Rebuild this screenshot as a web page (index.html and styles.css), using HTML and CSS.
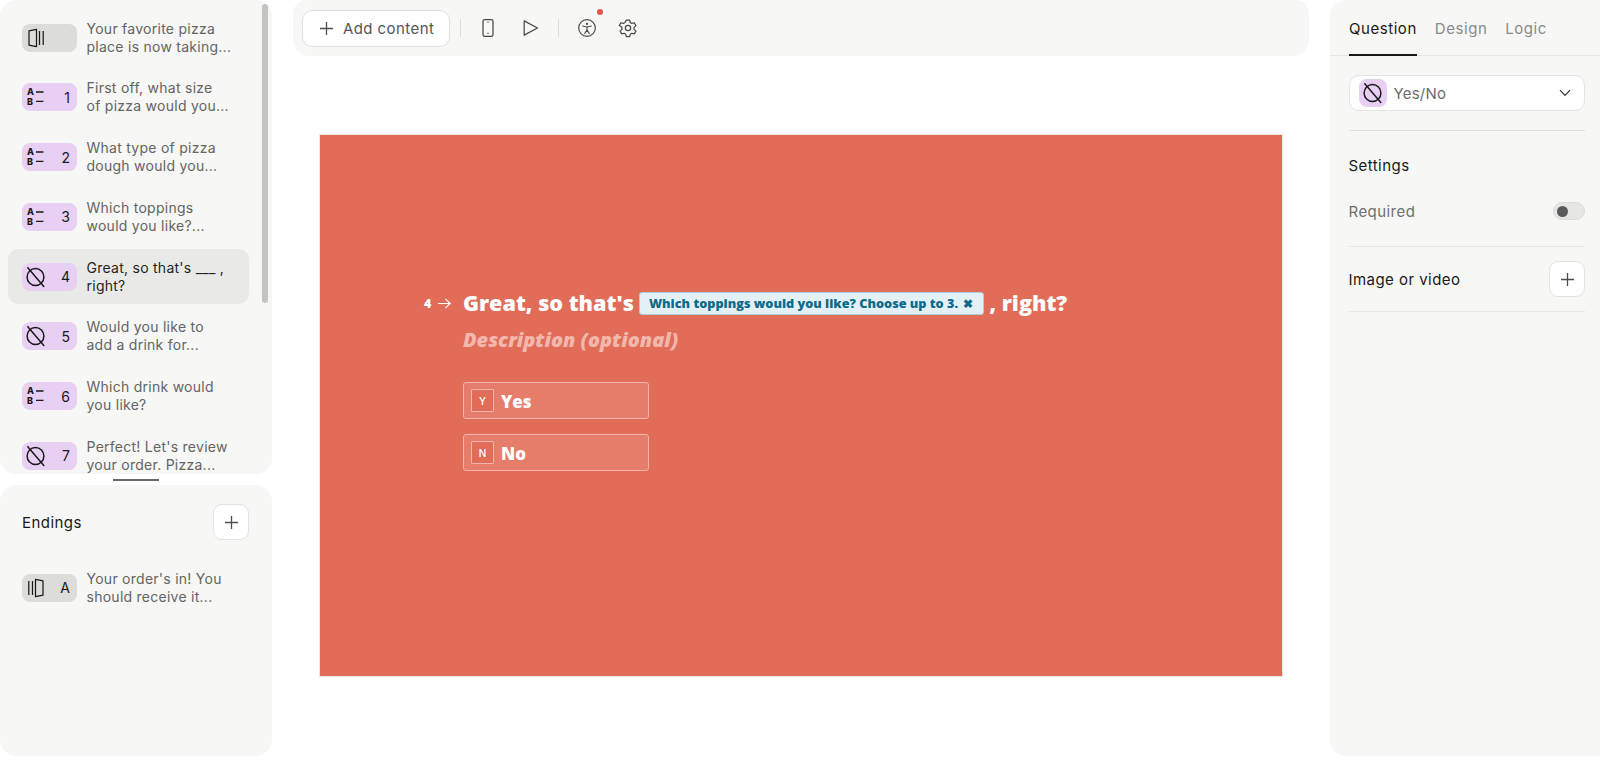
FILE: index.html
```html
<!DOCTYPE html>
<html lang="en">
<head>
<meta charset="utf-8">
<title>Form builder</title>
<link rel="stylesheet" href="styles.css">
</head>
<body>
<svg class="defs" width="0" height="0" aria-hidden="true">
  <defs>
    <symbol id="i-yesno" viewBox="0 0 24 24">
      <circle cx="11.5" cy="12" r="8.4" fill="none" stroke="#191919" stroke-width="1.5"/>
      <path d="M3.8 2.8 19.8 21.4" fill="none" stroke="#191919" stroke-width="1.5" stroke-linecap="round"/>
    </symbol>
    <symbol id="i-ab" viewBox="0 0 24 24">
      <text x="3" y="10.4" class="ab-letter">A</text>
      <text x="3" y="19.6" class="ab-letter">B</text>
      <path d="M12 7h7.5M12 16.4h7.5" stroke="#191919" stroke-width="1.4" fill="none"/>
    </symbol>
    <symbol id="i-welcome" viewBox="0 0 24 24">
      <path d="M5 4.8 12.5 3.4v17.2L5 19.2z" fill="none" stroke="#191919" stroke-width="1.25" stroke-linejoin="round"/>
      <path d="M15.5 5v14M19.2 5v14" stroke="#191919" stroke-width="1.25" fill="none"/>
    </symbol>
    <symbol id="i-ending" viewBox="0 0 24 24">
      <path d="M4.8 5v14M8.5 5v14" stroke="#191919" stroke-width="1.25" fill="none"/>
      <path d="M11.5 3.4l7.5 1.4v14.4l-7.5 1.4z" fill="none" stroke="#191919" stroke-width="1.25" stroke-linejoin="round"/>
    </symbol>
    <symbol id="i-plus" viewBox="0 0 16 16">
      <path d="M8 1v14M1 8h14" stroke="currentColor" stroke-width="1.4" fill="none"/>
    </symbol>
  </defs>
</svg>

<div class="app">
  <aside class="left">
    <section class="panel questions">
      <div class="thumb"></div>
      <ul class="list">
        <li class="row"><span class="badge grey"><svg class="bi"><use href="#i-welcome"/></svg></span><span class="row-text">Your favorite pizza<br>place is now taking...</span></li>
        <li class="row"><span class="badge"><svg class="bi"><use href="#i-ab"/></svg><b>1</b></span><span class="row-text">First off, what size<br>of pizza would you...</span></li>
        <li class="row"><span class="badge"><svg class="bi"><use href="#i-ab"/></svg><b>2</b></span><span class="row-text">What type of pizza<br>dough would you...</span></li>
        <li class="row"><span class="badge"><svg class="bi"><use href="#i-ab"/></svg><b>3</b></span><span class="row-text">Which toppings<br>would you like?...</span></li>
        <li class="row active"><span class="badge"><svg class="bi"><use href="#i-yesno"/></svg><b>4</b></span><span class="row-text">Great, so that's ___ ,<br>right?</span></li>
        <li class="row"><span class="badge"><svg class="bi"><use href="#i-yesno"/></svg><b>5</b></span><span class="row-text">Would you like to<br>add a drink for...</span></li>
        <li class="row"><span class="badge"><svg class="bi"><use href="#i-ab"/></svg><b>6</b></span><span class="row-text">Which drink would<br>you like?</span></li>
        <li class="row"><span class="badge"><svg class="bi"><use href="#i-yesno"/></svg><b>7</b></span><span class="row-text">Perfect! Let's review<br>your order. Pizza...</span></li>
      </ul>
    </section>
    <div class="handle-wrap"><div class="handle"></div></div>
    <section class="panel endings">
      <div class="end-head">
        <h2 class="label">Endings</h2>
        <button class="square-btn"><svg class="plus-sm"><use href="#i-plus"/></svg></button>
      </div>
      <div class="row end-row"><span class="badge grey"><svg class="bi"><use href="#i-ending"/></svg><b>A</b></span><span class="row-text">Your order's in! You<br>should receive it...</span></div>
    </section>
  </aside>

  <main class="center">
    <div class="toolbar">
      <button class="add-btn"><svg class="plus-md"><use href="#i-plus"/></svg>Add content</button>
      <span class="sep"></span>
      <svg class="tool phone" viewBox="0 0 24 24"><rect x="6" y="2" width="12" height="20" rx="2" fill="none" stroke="#4a4a4a" stroke-width="1.5"/><circle cx="12" cy="18.4" r="0.9" fill="#4a4a4a"/><path d="M11 5h2" stroke="#4a4a4a" stroke-width="1"/></svg>
      <svg class="tool play" viewBox="0 0 24 24"><path d="M5 3.5 21 12 5 20.5z" fill="none" stroke="#4a4a4a" stroke-width="1.5" stroke-linejoin="round"/></svg>
      <span class="sep sep2"></span>
      <span class="a11y">
        <svg class="tool" viewBox="0 0 24 24"><circle cx="12" cy="12" r="10" fill="none" stroke="#4a4a4a" stroke-width="1.4"/><circle cx="12" cy="7" r="1.4" fill="#4a4a4a"/><path d="M6.8 9.6 12 10.8l5.2-1.2M12 10.8v3.4M12 14.2 9.3 18.6M12 14.2l2.7 4.4" fill="none" stroke="#4a4a4a" stroke-width="1.4" stroke-linecap="round"/></svg>
        <i class="dot"></i>
      </span>
      <svg class="tool gear" viewBox="0 0 24 24"><circle cx="12" cy="12" r="3.2" fill="none" stroke="#4a4a4a" stroke-width="1.5"/><path d="M10 2.5h4l.7 2.9 1.9 1.1 2.9-.8 2 3.4-2.2 2.1v2.4l2.2 2.1-2 3.4-2.9-.8-1.9 1.1-.7 2.9h-4l-.7-2.9-1.9-1.1-2.9.8-2-3.4 2.2-2.1v-2.4L1.5 9.1l2-3.4 2.9.8 1.9-1.1z" fill="none" stroke="#4a4a4a" stroke-width="1.5" stroke-linejoin="round"/></svg>
    </div>
    <div class="canvas">
      <div class="q-line">
        <span class="q-num">4</span>
        <svg class="q-arrow" viewBox="0 0 16 16"><path d="M1 8h13M9 3l5 5-5 5" fill="none" stroke="#fff" stroke-width="1.3"/></svg>
        <h1 class="q-title">Great, so that's</h1>
        <span class="chip">Which toppings would you like? Choose up to 3.<span class="chip-x">✖</span></span>
        <span class="q-title q-after">, right?</span>
      </div>
      <p class="q-desc">Description (optional)</p>
      <div class="choice"><span class="key">Y</span><span class="choice-text">Yes</span></div>
      <div class="choice"><span class="key">N</span><span class="choice-text">No</span></div>
    </div>
  </main>

  <aside class="panel right">
    <nav class="tabs">
      <span class="tab on">Question</span>
      <span class="tab">Design</span>
      <span class="tab">Logic</span>
    </nav>
    <div class="props">
      <div class="select">
        <span class="sel-icon"><svg class="bi"><use href="#i-yesno"/></svg></span>
        <span class="sel-text">Yes/No</span>
        <svg class="chev" viewBox="0 0 12 8"><path d="M1 1.2 6 6.4l5-5.2" fill="none" stroke="#333" stroke-width="1.2"/></svg>
      </div>
      <div class="group settings">
        <h2 class="label">Settings</h2>
        <div class="req"><span class="req-text">Required</span><span class="toggle"><i></i></span></div>
      </div>
      <div class="group media">
        <h2 class="label">Image or video</h2>
        <button class="square-btn"><svg class="plus-sm"><use href="#i-plus"/></svg></button>
      </div>
    </div>
  </aside>
</div>
</body>
</html>
```

FILE: styles.css
```css
* { box-sizing: border-box; }
html, body { margin: 0; height: 100%; }
body {
  background: #fff;
  font-family: Inter, "Liberation Sans", sans-serif;
  color: #191919;
  overflow: hidden;
}
.defs { display: block; height: 0; }
.ab-letter { font: 800 9px Inter, sans-serif; fill: #191919; }

.app {
  display: grid;
  grid-template-columns: 272px 1016px 270px;
  column-gap: 21px;
  height: 756px;
}
.panel { background: #f7f7f5; border-radius: 16px; }

/* left column */
.left { display: flex; flex-direction: column; height: 100%; }
.questions { position: relative; height: 474px; overflow: hidden; }
.thumb {
  position: absolute;
  top: 4px; right: 4px;
  width: 6px; height: 299px;
  border-radius: 3px;
  background: #c4c4c2;
}
.list {
  list-style: none;
  margin: 0;
  padding: 10px 0 0 8px;
  display: flex;
  flex-direction: column;
  gap: 4.75px;
  width: 249px;
}
.row {
  height: 55px;
  flex: none;
  display: flex;
  align-items: center;
  padding: 0 8px 0 14px;
  border-radius: 10px;
}
.row.active { background: #e9e9e7; }
.row.active .row-text { color: #1f1f1f; }
.badge {
  width: 55px; height: 28px;
  flex: none;
  border-radius: 8px;
  background: #e7d0f3;
  display: flex;
  align-items: center;
  justify-content: space-between;
  padding: 0 7px 0 2px;
}
.badge.grey { background: #dcdcda; }
.badge b { font-weight: 400; font-size: 14px; color: #191919; }
.bi { width: 24px; height: 24px; display: block; }
.row-text {
  margin-left: 9.5px;
  font-size: 14px;
  line-height: 18px;
  letter-spacing: .26px;
  color: #646464;
  white-space: nowrap;
}
.handle-wrap { height: 11px; display: flex; align-items: center; justify-content: center; }
.handle { width: 46px; height: 2px; background: #6a6a6a; }
.endings { flex: 1; padding: 19px 0 0 8px; }
.end-head {
  display: flex; align-items: center; justify-content: space-between;
  width: 241px;
  padding-left: 14px;
}
.label { margin: 0; font-size: 15px; line-height: 20px; font-weight: 400; letter-spacing: .45px; color: #191919; }
.end-head .label, .media .label { padding-top: 1px; }
.square-btn {
  width: 36px; height: 36px;
  padding: 0;
  background: #fff;
  border: 1px solid #e2e2e0;
  border-radius: 9px;
  display: flex; align-items: center; justify-content: center;
  color: #4d4d4d;
}
.plus-sm { width: 15px; height: 15px; }
.end-row { width: 241px; margin-top: 20px; }

/* center */
.center { display: flex; flex-direction: column; }
.toolbar {
  height: 56px;
  flex: none;
  background: #f7f7f5;
  border-radius: 14px 14px 16px 16px;
  display: flex;
  align-items: center;
  padding-left: 9px;
}
.add-btn {
  height: 37px; width: 148px;
  background: #fff;
  border: 1px solid #e0e0de;
  border-radius: 10px;
  display: flex; align-items: center;
  padding: 0 0 0 16px;
  font: 400 15px Inter, sans-serif;
  letter-spacing: .42px;
  color: #555;
}
.plus-md { width: 15px; height: 15px; margin-right: 9px; color: #4d4d4d; }
.sep { width: 1px; height: 18px; background: #dcdcda; margin-left: 10px; }
.tool { width: 20px; height: 20px; display: block; flex: none; }
.phone { margin-left: 17px; }
.play { margin-left: 22px; }
.sep2 { margin-left: 18px; }
.a11y { position: relative; margin-left: 18px; display: block; }
.dot {
  position: absolute;
  top: -9px; right: -6px;
  width: 6px; height: 6px;
  border-radius: 50%;
  background: #e5534b;
}
.gear { margin-left: 21px; }

.canvas {
  margin: 78px 26px 0 26px;
  height: 543px;
  background: #e16d59;
  border: 1px solid #efe6e3;
  padding: 156px 0 0 104px;
  color: #fff;
  font-family: "Open Sans", Lato, sans-serif;
}
.q-line { display: flex; align-items: center; height: 24px; white-space: nowrap; }
.q-num { font-weight: 800; font-size: 12.5px; width: 13px; }
.q-arrow { width: 15px; height: 15px; margin-right: 11px; flex: none; }
.q-title { margin: 0; font-size: 21.6px; line-height: 24px; font-weight: 800; }
.chip {
  margin-left: 5px;
  width: 345px; height: 23px;
  flex: none;
  display: flex; align-items: center; justify-content: space-between;
  padding: 0 10px 0 9px;
  background: #e3f1f6;
  border: 1px solid #a9cfdc;
  border-radius: 3px;
  color: #0e6a8a;
  font-size: 12.7px;
  font-weight: 800;
}
.chip-x { font-size: 12px; }
.q-after { margin-left: 5.5px; }
.q-desc {
  margin: 13px 0 0 39px;
  font-size: 19.9px;
  line-height: 24px;
  font-weight: 800;
  font-style: italic;
  color: #f3b8ad;
}
.choice {
  margin: 15px 0 0 39px;
  width: 186px; height: 37px;
  display: flex; align-items: center;
  padding-left: 7px;
  background: #e67c6a;
  border: 1px solid #f3b5aa;
  border-radius: 3px;
}
.q-desc + .choice { margin-top: 30px; }
.key {
  width: 23px; height: 23px;
  display: flex; align-items: center; justify-content: center;
  border: 1px solid #f3b5aa;
  background: #e16d59;
  border-radius: 1px;
  font: 500 10px Inter, sans-serif;
}
.choice-text { margin-left: 7px; padding-top: 2px; font-size: 17px; font-weight: 800; }

/* right */
.right { height: 100%; border-radius: 16px 0 0 16px; }
.tabs {
  height: 56px;
  display: flex;
  gap: 18px;
  padding-left: 19px;
  border-bottom: 1px solid #e6e6e4;
}
.tab {
  height: 56px;
  display: flex; align-items: center;
  padding-top: 2px;
  font-size: 15px;
  letter-spacing: .55px;
  color: #8a8a8a;
  border-bottom: 2px solid transparent;
}
.tab.on { color: #191919; border-bottom-color: #191919; }
.props { padding: 19px 15px 0 18.5px; }
.select {
  height: 36px;
  background: #fff;
  border: 1px solid #e4e4e2;
  border-radius: 10px;
  display: flex; align-items: center;
  padding-left: 9px;
}
.sel-icon {
  width: 28px; height: 28px;
  border-radius: 8px;
  background: #e7d0f3;
  display: flex; align-items: center; justify-content: center;
}
.sel-text { margin-left: 7px; font-size: 15px; letter-spacing: .2px; color: #6b6b6b; flex: 1; }
.chev { width: 12px; height: 8px; margin-right: 13px; }
.group { border-top: 1px solid #e0e0de; }
.settings { margin-top: 19px; padding: 25px 0 25px; border-bottom: 1px solid #e6e6e4; }
.req { display: flex; align-items: center; justify-content: space-between; margin-top: 25px; height: 20px; }
.req-text { font-size: 15px; letter-spacing: .45px; color: #6f6f6f; }
.toggle {
  width: 32px; height: 18px;
  border-radius: 9px;
  background: #e6e6e4;
  border: 1px solid #dcdcda;
  display: flex; align-items: center;
  padding-left: 3px;
}
.toggle i { width: 11px; height: 11px; border-radius: 50%; background: #5a5a5a; display: block; }
.media {
  border-top: 0;
  border-bottom: 1px solid #e6e6e4;
  display: flex; align-items: center; justify-content: space-between;
  height: 65px;
}
```
